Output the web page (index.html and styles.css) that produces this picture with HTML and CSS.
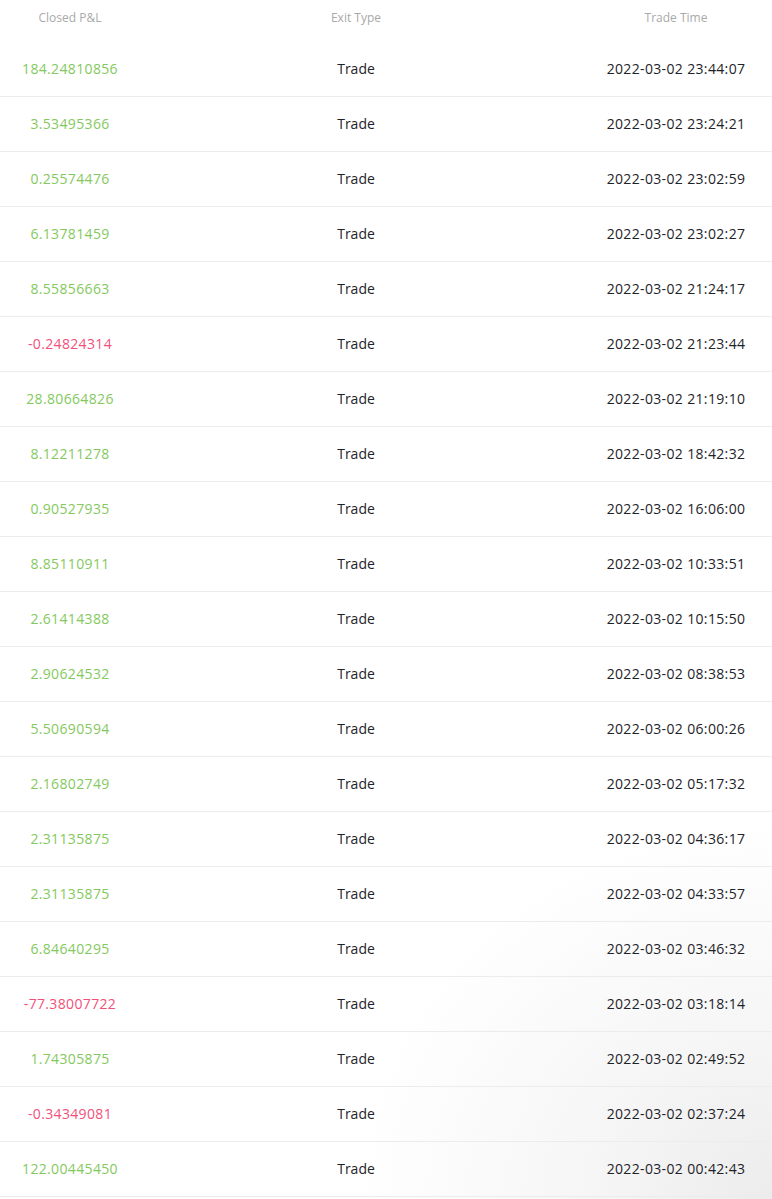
FILE: index.html
```html
<!DOCTYPE html>
<html>
<head>
<meta charset="utf-8">
<link rel="stylesheet" href="styles.css">
</head>
<body>
<div class="table">
  <div class="row head">
    <div class="c1">Closed P&amp;L</div>
    <div class="c2">Exit Type</div>
    <div class="c3">Trade Time</div>
  </div>
  <div class="row"><div class="c1 pos">184.24810856</div><div class="c2">Trade</div><div class="c3">2022-03-02 23:44:07</div></div>
  <div class="row"><div class="c1 pos">3.53495366</div><div class="c2">Trade</div><div class="c3">2022-03-02 23:24:21</div></div>
  <div class="row"><div class="c1 pos">0.25574476</div><div class="c2">Trade</div><div class="c3">2022-03-02 23:02:59</div></div>
  <div class="row"><div class="c1 pos">6.13781459</div><div class="c2">Trade</div><div class="c3">2022-03-02 23:02:27</div></div>
  <div class="row"><div class="c1 pos">8.55856663</div><div class="c2">Trade</div><div class="c3">2022-03-02 21:24:17</div></div>
  <div class="row"><div class="c1 neg">-0.24824314</div><div class="c2">Trade</div><div class="c3">2022-03-02 21:23:44</div></div>
  <div class="row"><div class="c1 pos">28.80664826</div><div class="c2">Trade</div><div class="c3">2022-03-02 21:19:10</div></div>
  <div class="row"><div class="c1 pos">8.12211278</div><div class="c2">Trade</div><div class="c3">2022-03-02 18:42:32</div></div>
  <div class="row"><div class="c1 pos">0.90527935</div><div class="c2">Trade</div><div class="c3">2022-03-02 16:06:00</div></div>
  <div class="row"><div class="c1 pos">8.85110911</div><div class="c2">Trade</div><div class="c3">2022-03-02 10:33:51</div></div>
  <div class="row"><div class="c1 pos">2.61414388</div><div class="c2">Trade</div><div class="c3">2022-03-02 10:15:50</div></div>
  <div class="row"><div class="c1 pos">2.90624532</div><div class="c2">Trade</div><div class="c3">2022-03-02 08:38:53</div></div>
  <div class="row"><div class="c1 pos">5.50690594</div><div class="c2">Trade</div><div class="c3">2022-03-02 06:00:26</div></div>
  <div class="row"><div class="c1 pos">2.16802749</div><div class="c2">Trade</div><div class="c3">2022-03-02 05:17:32</div></div>
  <div class="row"><div class="c1 pos">2.31135875</div><div class="c2">Trade</div><div class="c3">2022-03-02 04:36:17</div></div>
  <div class="row"><div class="c1 pos">2.31135875</div><div class="c2">Trade</div><div class="c3">2022-03-02 04:33:57</div></div>
  <div class="row"><div class="c1 pos">6.84640295</div><div class="c2">Trade</div><div class="c3">2022-03-02 03:46:32</div></div>
  <div class="row"><div class="c1 neg">-77.38007722</div><div class="c2">Trade</div><div class="c3">2022-03-02 03:18:14</div></div>
  <div class="row"><div class="c1 pos">1.74305875</div><div class="c2">Trade</div><div class="c3">2022-03-02 02:49:52</div></div>
  <div class="row"><div class="c1 neg">-0.34349081</div><div class="c2">Trade</div><div class="c3">2022-03-02 02:37:24</div></div>
  <div class="row"><div class="c1 pos">122.00445450</div><div class="c2">Trade</div><div class="c3">2022-03-02 00:42:43</div></div>
</div>
</body>
</html>
```
FILE: styles.css
```css
html, body {
  margin: 0;
  padding: 0;
}
body {
  width: 772px;
  min-height: 1199px;
  font-family: "Open Sans", Roboto, "Liberation Sans", sans-serif;
  color: #1e2329;
  background: radial-gradient(ellipse 420px 380px at 100% 100%, #ececec 0%, #f6f6f6 45%, #ffffff 100%);
}
.table {
  display: flex;
  flex-direction: column;
}
.row {
  display: grid;
  grid-template-columns: 140px 432px 200px;
  height: 55px;
  align-items: center;
  border-bottom: 1px solid #ececec;
  box-sizing: border-box;
  font-size: 14px;
  padding-bottom: 2px;
}
.row .c1, .row .c3 {
  letter-spacing: 0.35px;
}
.row.head {
  height: 42px;
  border-bottom: none;
  align-items: start;
  padding-top: 9px;
  padding-bottom: 0;
  font-size: 12px;
  color: #a9a9a9;
}
.row.head .c1, .row.head .c3 {
  letter-spacing: 0;
}
.c1, .c2, .c3 {
  text-align: center;
  white-space: nowrap;
}
.c3 {
  padding-left: 8px;
}
.pos { color: #84c95e; }
.neg { color: #f2507a; }
```
